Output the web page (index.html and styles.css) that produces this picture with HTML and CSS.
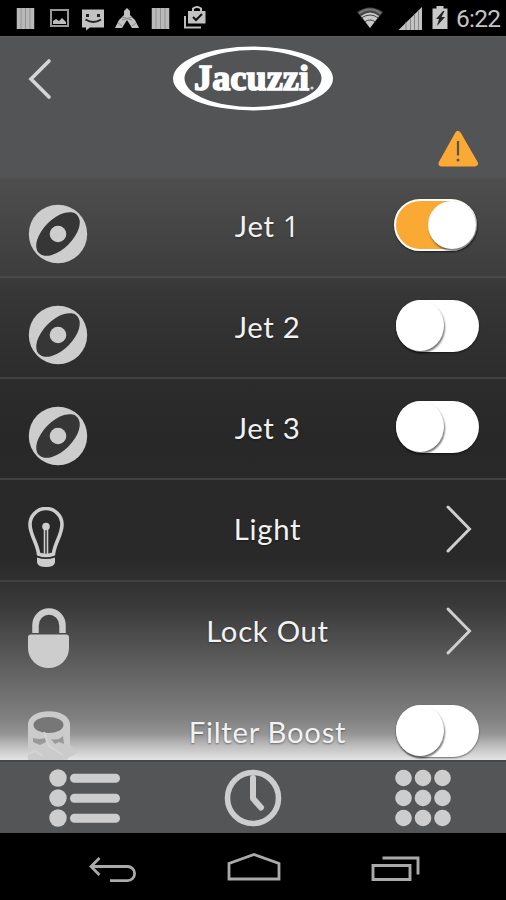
FILE: index.html
```html
<!DOCTYPE html>
<html lang="en">
<head>
<meta charset="utf-8">
<title>Jacuzzi</title>
<link rel="stylesheet" href="styles.css">
</head>
<body>
<svg class="defs" aria-hidden="true">
  <symbol id="jet" viewBox="0 0 60 60"><circle cx="30" cy="30" r="29.2" fill="#cdcdcd"/><ellipse cx="30" cy="30" rx="27" ry="14.8" transform="rotate(-45 30 30)" fill="#363636"/><circle cx="30" cy="30" r="8.3" fill="#cdcdcd"/></symbol>
  <symbol id="chev" viewBox="0 0 28 50"><path d="M3 3L24.500 25L3 47" fill="none" stroke="#cfcfcf" stroke-width="3" stroke-linecap="round"/></symbol>
  <symbol id="bars" viewBox="0 0 18 21"><path fill="#b9b9b9" d="M0 0h18v21H0z"/><path d="M4.500 0v21M9 0v21M13.500 0v21" stroke="#929292" stroke-width="1"/></symbol>
</svg>
<div class="screen">
  <div class="status">
    <svg class="status-left" viewBox="0 0 210 36">
      <use href="#bars" x="16.500" y="8" width="18" height="21"/>
      <path d="M51 10h17v16H51z" fill="none" stroke="#999" stroke-width="2"/><path d="M53 24v-3l3-2 3 2 3-3 4 4v2z" fill="#bbb"/>
      <path d="M82 9.500h22v18H90l-4 3v-3h-4z" fill="#c2c2c2"/><path d="M86 14h3v3h-3zM97 14h3v3h-3z" fill="#222"/><path d="M85.500 19.500q8 5 15.500 0" stroke="#222" stroke-width="2" fill="none"/>
      <path d="M127 8l3 3 0 4 5 5 4 8h-7l-5-8-5 8h-7l4-8 5-5 0-4z" fill="#c2c2c2"/><path d="M122 17l10 3M132 17l-10 3M118 23l4 3M136 23l-4 3" stroke="#888" stroke-width="1"/>
      <use href="#bars" x="151.500" y="8" width="18" height="21"/>
      <path d="M185 16v11.500h16" fill="none" stroke="#bbb" stroke-width="2"/><path d="M188 11h17.500v12.500H188z" fill="#c2c2c2"/><path d="M193 11V8.500q4-3 8 0V11" stroke="#c2c2c2" stroke-width="2" fill="none"/><path d="M193 17l3 3 6-6" fill="none" stroke="#111" stroke-width="2"/>
    </svg>
    <div class="status-right">
      <svg class="signals" viewBox="0 0 94 36">
        <path d="M0 12Q13 3 26 12L13 28z" fill="#444"/><path d="M4 16Q13 9 22 16L13 28z" fill="#c8c8c8"/><path d="M2 13.500Q13 5.500 24 13.500" stroke="#777" stroke-width="2" fill="none"/><path d="M4.500 18Q13 12 21.500 18M7.500 22Q13 18 18.500 22" stroke="#444" stroke-width="1" fill="none"/>
        <path d="M41.500 30L65 7v23z" fill="#c2c2c2"/><path d="M49 22v8M53.500 18v12M57.500 14v16M61.500 10v20" stroke="#888"/>
        <path d="M75.500 8.500h4V6h7v2.500h4V29h-15z" fill="#c8c8c8"/><path d="M86 11l-7 8h3l-2 7 8-9h-3.500l3-6z" fill="#222"/>
      </svg>
      <span class="time">6:22</span>
    </div>
  </div>

  <header class="header">
    <div class="brand">
      <svg class="back" viewBox="0 0 26 44"><path d="M23 4L5 22L23 40" fill="none" stroke="#d5d5d5" stroke-width="3.600" stroke-linecap="round"/></svg>
      <svg class="logo" viewBox="0 0 162 66">
        <path fill="#fff" fill-rule="evenodd" d="M1 32.500a80 32 0 1 0 160 0a80 32 0 1 0-160 0zM12.500 32.500a68.500 28.500 0 1 0 137 0a68.500 28.500 0 1 0-137 0z"/>
        <text class="logo-text" x="22" y="43.500" textLength="115" lengthAdjust="spacingAndGlyphs">Jacuzzi</text>
        <circle cx="140" cy="42" r="1.600" fill="#ddd"/>
      </svg>
    </div>
    <svg class="warn" viewBox="0 0 42 40"><path d="M21 5L38 34.500H4.500z" fill="#fba935" stroke="#fba935" stroke-width="6" stroke-linejoin="round"/><path d="M21 12v14.500" stroke="#555" stroke-width="2.200"/><circle cx="21" cy="31" r="1.500" fill="#555"/></svg>
  </header>

  <main class="list">
    <div class="row"><svg class="icon jet"><use href="#jet"/></svg><span class="label">Jet <span class="one">1</span></span><span class="toggle on"><i class="knob"></i></span></div>
    <div class="row"><svg class="icon jet"><use href="#jet"/></svg><span class="label">Jet 2</span><span class="toggle"><i class="knob"></i></span></div>
    <div class="row"><svg class="icon jet"><use href="#jet"/></svg><span class="label">Jet 3</span><span class="toggle"><i class="knob"></i></span></div>
    <div class="row">
      <svg class="icon bulb" viewBox="0 0 36 60"><path d="M10.500 47C9.500 36 2 28 2 17.500a16 16 0 0 1 32 0C34 28 26.500 36 25.500 47q-7.500 3-15 0z" fill="none" stroke="#cdcdcd" stroke-width="3.600"/><path d="M16.500 20v27M19.500 20v27" stroke="#cdcdcd" stroke-width="1.600"/><circle cx="18" cy="19.500" r="3.800" fill="#cdcdcd"/><path d="M9 50.500q9 3 18 0v5q-1 4.500-9 4.500t-9-4.500z" fill="#cdcdcd"/></svg>
      <span class="label">Light</span><svg class="chev"><use href="#chev"/></svg>
    </div>
    <div class="row">
      <svg class="icon lock" viewBox="0 0 42 60"><path d="M7.500 25V17.500a13.500 14 0 0 1 27 0V25" fill="none" stroke="#cdcdcd" stroke-width="6.500"/><path d="M3 26.500h35q3 0 3 3V40a20.300 19.800 0 0 1-41 0V29.500q0-3 3-3z" fill="#cdcdcd"/></svg>
      <span class="label">Lock Out</span><svg class="chev"><use href="#chev"/></svg>
    </div>
    <div class="row">
      <svg class="icon filter" viewBox="0 0 50 60"><path d="M0 60V13C1-4 41-4 42 13v21l7 8-9 5-6 12z" fill="#cbcbcb"/><ellipse cx="20.500" cy="14" rx="15" ry="8" fill="#777"/><path d="M5 27q6 2 12 0l1 4-6 3-7-3zM23 28q7 2 12-3l1 8-5-2-4 2z" fill="#999"/><path d="M16 21l5 14 14 9M0 43l7-3 8 5" stroke="#d4d4d4" stroke-width="2" fill="none"/></svg>
      <span class="label">Filter Boost</span><span class="toggle"><i class="knob"></i></span>
    </div>
  </main>

  <nav class="tabs">
    <svg class="tab-list" viewBox="0 0 72 58"><g fill="#cdcdcd"><circle cx="10" cy="9" r="8.700"/><circle cx="10" cy="29" r="8.700"/><circle cx="10" cy="49" r="8.700"/><rect x="22" y="4.700" width="50" height="9" rx="4.500"/><rect x="22" y="24.700" width="50" height="9" rx="4.500"/><rect x="22" y="44.700" width="50" height="9" rx="4.500"/></g></svg>
    <svg class="tab-clock" viewBox="0 0 58 58"><circle cx="29" cy="29" r="25.500" fill="none" stroke="#cdcdcd" stroke-width="5.600"/><path d="M29 9v20.500l8 9" fill="none" stroke="#cdcdcd" stroke-width="6" stroke-linecap="round" stroke-linejoin="round"/></svg>
    <svg class="tab-grid" viewBox="0 0 56 58"><g fill="#cdcdcd"><circle cx="8.500" cy="9" r="8.300"/><circle cx="28" cy="9" r="8.300"/><circle cx="47.500" cy="9" r="8.300"/><circle cx="8.500" cy="29" r="8.300"/><circle cx="28" cy="29" r="8.300"/><circle cx="47.500" cy="29" r="8.300"/><circle cx="8.500" cy="49" r="8.300"/><circle cx="28" cy="49" r="8.300"/><circle cx="47.500" cy="49" r="8.300"/></g></svg>
  </nav>

  <div class="navbar">
    <svg class="nav-back" viewBox="0 0 48 28"><path d="M10.500 2L2 10.500l8.500 8.500M3 10.500h35.500a7 7 0 0 1 0 14.200H21" fill="none" stroke="#aaa" stroke-width="2.800"/></svg>
    <svg class="nav-home" viewBox="0 0 54 28"><path d="M2 26V10.500L27 1.500l25 9V26z" fill="none" stroke="#aaa" stroke-width="2.800"/></svg>
    <svg class="nav-recent" viewBox="0 0 50 26"><path d="M2 9.500h37v14H2zM11.500 2H47v16.500" fill="none" stroke="#aaa" stroke-width="2.900"/></svg>
  </div>
</div>
</body>
</html>
```

FILE: styles.css
```css
* { box-sizing: border-box; }
body { margin: 0; background: #000; }
svg { display: block; flex: none; }
.defs { position: absolute; width: 0; height: 0; }
.screen { width: 506px; height: 900px; display: flex; flex-direction: column; overflow: hidden; font-family: Lato, "Liberation Sans", sans-serif; }

.status { height: 36px; background: #000; display: flex; justify-content: space-between; flex: none; }
.status-left { width: 210px; height: 36px; }
.status-right { display: flex; padding-right: 7px; }
.signals { width: 94px; height: 36px; margin-right: 5px; }
.time { font: 24.500px/38px Roboto, sans-serif; color: #c4c4c4; width: 43px; letter-spacing: -0.7px; }

.header { height: 142px; background: #535456; flex: none; border-top: 1px solid #5c5c5c; }
.brand { display: flex; align-items: center; height: 84px; padding-left: 26px; }
.back { width: 26px; height: 44px; margin-right: 120px; margin-top: -1px; }
.logo { width: 162px; height: 66px; }
.logo-text { font: bold 36px "Liberation Serif", serif; fill: #fff; stroke: #fff; stroke-width: 1.500px; }
.warn { width: 42px; height: 40px; margin: 8px 0 0 437px; }

.list { height: 582px; flex: none; overflow: hidden; background: linear-gradient(#4e4e4e 0, #3d3d3d 98px, #373737 110px, #2c2c2c 200px, #282828 260px, #292929 380px, #303030 402px, #3b3b3b 430px, #666 500px, #808080 540px, #959595 556px, #bebebe 568px, #e2e2e2 581px); }
.row { height: 101.200px; padding: 0 27px 0 28px; display: grid; grid-template-columns: 60px 1fr 84px; border-bottom: 2px solid #414141; }
.row:first-child { height: 100px; border-bottom-color: #4a4a4a; }
.row:nth-child(n+5) { border-bottom-color: transparent; }
.icon { margin-top: 27px; height: 60px; }
.row:first-child .icon { margin-top: 26px; }
.jet { width: 60px; margin-left: -0.500px; }
.bulb { width: 36px; }
.lock { width: 42px; margin-top: 26px; }
.filter { width: 50px; margin-top: 28px; }
.label { color: #f2f2f2; font-size: 29.300px; line-height: 38px; padding-top: 30px; text-align: center; letter-spacing: 0.7px; white-space: nowrap; text-shadow: 0 1px 2px #0006; margin-left: 52px; }
.one { font-family: "Open Sans", sans-serif; font-size: 29px; line-height: 1; }
.toggle { width: 83px; height: 52px; margin-top: 22px; border-radius: 26px; background: #fff; box-shadow: 0 1px 2px #0008; justify-self: end; }
.knob { display: block; width: 48px; height: 51px; border-radius: 50%; background: #fff; box-shadow: 1px 2px 2px #0008; }
.toggle.on { background: #fba935; border: 2px solid #fff; margin-right: 2px; }
.on .knob { margin-left: 32px; height: 48px; }
.chev { width: 28px; height: 50px; margin-top: 24px; justify-self: end; margin-right: 6px; }
.row:first-child .toggle { margin-top: 21px; }
.row:first-child .label { padding-top: 29px; }

.tabs { height: 73px; flex: none; background: #535557; border-top: 2px solid #45474a; display: flex; padding: 8px 55px 0 48px; }
.tab-list { width: 72px; height: 58px; margin-top: -1px; }
.tab-clock { width: 58px; height: 58px; margin-left: 104px; margin-top: -1px; }
.tab-grid { width: 56px; height: 58px; margin-left: auto; margin-top: -1px; }
.navbar { height: 67px; background: #000; display: flex; padding: 21px 85px 0 89px; justify-content: space-between; }
.nav-back { width: 48px; height: 28px; margin-top: 2px; }
.nav-home { width: 54px; height: 28px; margin-top: -1px; }
.nav-recent { width: 50px; height: 26px; margin-top: 2px; }
```
